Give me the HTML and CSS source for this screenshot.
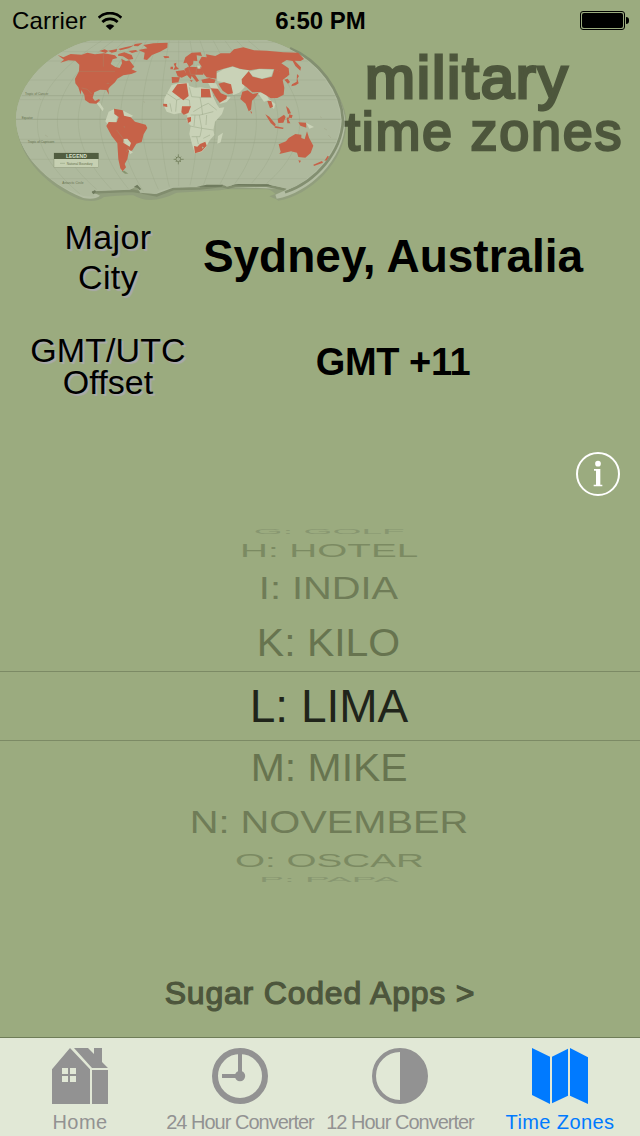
FILE: index.html
```html
<!DOCTYPE html>
<html lang="en">
<head>
  <meta charset="UTF-8">
  <meta name="viewport" content="width=device-width, initial-scale=1.0">
  <title>Military Time Zones</title>
  <link rel="stylesheet" href="styles.css">
</head>
<body>
  <div class="status-bar">
    <div class="carrier">
      <span>Carrier</span>
      <svg class="wifi" viewBox="0 0 72 54">
        <path d="M2 17 A49 49 0 0 1 70 17" fill="none" stroke="#000" stroke-width="8"/>
        <path d="M13 30 A33 33 0 0 1 59 30" fill="none" stroke="#000" stroke-width="8"/>
        <path d="M23 42 A19 19 0 0 1 49 42 L36 54 Z"/>
      </svg>
    </div>
    <div class="clock">6:50 PM</div>
    <div class="battery"><div class="battery-body"><div class="battery-level"></div></div><div class="battery-cap"></div></div>
  </div>

  <header>
    <svg class="map" viewBox="0 120 1032 495">
      <!-- raised edge -->
      <path fill="#919e7d" d="M270 122 C150 150 50 250 48 358 C50 460 125 550 235 597 Q285 612 312 591 Q370 584 400 586 Q425 600 450 600 Q490 598 530 578 L660 571 L680 568 L800 568 Q815 570 826 582 L808 589 Q830 598 835 602 C930 585 1036 490 1040 365 C1036 280 940 155 800 121 Z"/>
      <path fill="#b3bda3" d="M270 122 C150 150 50 250 48 358 C50 460 140 550 250 594 Q285 600 300 587 L275 574 L390 570 L412 556 L418 580 L470 584 L520 566 L680 560 L862 568 L826 584 L830 596 C925 580 1033 480 1036 365 C1030 270 932 152 800 121 Z"/>
      <path class="rim" d="M855 577 C950 545 1024 455 1029 362 C1025 270 955 180 870 145"/>
      <path class="rim-bottom" d="M275 577 L395 572 L418 576 L470 586 L520 567 L600 565 L665 558 L684 563 L705 557 L800 557 L860 569"/>
      <!-- ocean -->
      <path fill="#aeb99d" d="M270 122 C150 150 50 250 48 358 C50 460 140 550 250 588 L285 590 L275 574 L390 569 L412 556 L420 578 L465 582 L482 571 L520 562 L600 560 L672 553 L680 560 L705 553 L800 552 L860 566 L848 576 C945 540 1018 450 1022 360 C1018 265 925 148 798 121 Z"/>
      <path fill="#6f7b5e" d="M275 576l10-6 3 5-8 8zM402 560l10-6 12 14-6 2-5-6zM590 560l30-6 50 0-6 6-40 1zM695 556l20-4 60 1 30 0 10 5z"/>
      <path class="grid" d="M245 127H830M185 155H880M142 183H925M85 240H980M57 299H1013M48 358H1022M57 418H1012M85 478H985M150 536H920"/>
      <path class="grid" d="M305 122C60 280 60 430 240 582M340 122C120 280 130 430 290 568M375 122C190 280 200 430 335 568M410 122C265 280 270 430 385 566M440 122C335 280 340 430 430 574M475 122C410 280 410 430 475 568M508 122C475 280 475 430 508 560M536 122V558M570 122C600 280 600 430 570 556M600 122C660 280 660 430 610 556M640 122C730 280 730 430 660 552M675 122C795 280 795 430 705 550M710 122C870 280 865 430 755 549M745 122C940 280 940 430 800 550"/>
      <path class="tropic" d="M65 287H1010M48 358H1022M62 428H1008"/>

      <!-- countries without a stripe -->
      <path class="land" d="M515 255 L535 250 L565 248 L568 258 L585 263 L602 262 L632 267 L640 290 L650 312 L658 324 L673 322 L666 342 L645 365 L640 390 L643 405 L628 422 L618 442 L605 456 L584 460 L576 432 L568 402 L572 378 L560 362 L562 345 L545 338 L522 343 L500 335 L491 316 L493 295 Z"/>
      <path class="land" d="M654 408 L669 398 L662 427 L652 431 Z"/>
      <path class="land" d="M326 335 L343 327 L352 350 L348 368 L324 374 L316 364 Z M370 332 L399 347 L386 356 L372 347 Z"/>
      <path class="land" d="M287 306 L300 309 L311 326 L308 334 L298 320 Z M328 290l8 8M342 300l9 2"/>
      <path class="land" d="M650 220 L672 207 L698 200 L722 208 L748 211 L729 235 L734 262 L718 278 L700 285 L688 268 L676 248 L652 243 Z M624 248 L648 250 L656 266 L636 270 Z M674 290 L692 292 L680 306 L658 312 Z"/>
      <path class="land" d="M747 215 L778 207 L820 210 L814 228 L786 236 L758 228 Z M774 280 L796 276 L806 297 L826 312 L822 327 L812 318 L808 300 L792 305 Z M918 368 L942 381 L928 386 Z"/>
      <path class="borders" d="M500 280L530 300L545 295L568 300L570 320M510 310L515 335M530 300L527 335M568 262L575 290L600 292L605 320L580 335M600 292H635M572 345L600 345L640 335M603 320L625 310L650 330M598 345L605 385L640 390M570 378L605 385L600 410L575 410M610 415L630 405M620 345L618 375M585 345L582 378M605 320L608 345M590 410L595 432"/>

      <!-- highlighted countries -->
      <path class="red" d="M173 165 L190 172 L212 162 L245 164 L262 158 L285 163 L312 160 L345 166 L352 174 L338 178 L332 192 L346 201 L359 204 L366 190 L364 176 L378 184 L388 181 L403 200 L395 208 L411 215 L394 222 L370 226 L352 236 L345 247 L330 260 L325 267 L327 284 L319 270 L300 269 L283 277 L278 294 L285 303 L297 297 L300 301 L289 311 L269 310 L255 300 L253 285 L244 270 L242 284 L235 262 L226 250 L225 236 L237 214 L238 194 L226 182 L205 181 L181 188 L192 179 Z"/>
      <path class="red" d="M430 135 L460 130 L503 128 L502 143 L480 155 L456 165 L441 180 L431 178 L434 158 L415 150 L442 145 Z M490 168l16 1 2 4-14 2z"/>
      <path class="red" d="M298 153l16-5 11 5-8 6zM324 152l28-5-3 8-14 3zM355 147l20-5 28-6-17 9-25 6zM355 162l18-5 22 8 5 12-14 2-17-10-15-2zM404 132l24-3-14 10-13-1zM385 153l22-3 7 4-18 5z"/>
      <path class="red" d="M342 326 L368 331 L372 347 L392 352 L405 365 L437 374 L442 384 L431 403 L425 426 L409 431 L397 451 L386 457 L382 478 L374 492 L378 502 L368 514 L361 505 L355 478 L352 430 L335 408 L319 378 L326 366 L350 367 L356 351 L343 342 Z"/>
      <path class="land" d="M370 417 L382 416 L393 429 L389 440 L370 428 Z M385 448 L399 457 L390 463 Z"/>
      <path fill="#87946f" d="M365 514l8-2 12 9-10 0z"/>
      <path class="red" d="M532 253 L560 250 L566 288 L550 301 L516 275 Z M603 266 L629 267 L633 292 L603 292 Z M546 319 L573 319 L565 339 L551 344 L544 337 Z M561 353 L573 351 L573 364 L564 369 Z M489 311 L501 312 L502 321 L490 319 Z M582 438 L592 440 L600 432 L616 425 L620 437 L605 454 L585 460 Z"/>
      <path class="red" d="M515 231 L540 232 L535 247 L516 249 Z M527 214 L553 210 L561 226 L545 233 L533 229 Z M521 191 L529 188 L528 198 L537 207 L520 210 L525 200 Z M512 200h7v8h-8z M550 190 L556 172 L575 158 L602 157 L606 168 L590 166 L592 183 L580 182 L579 193 L568 201 L560 188 Z M553 207 L565 200 L605 202 L610 224 L585 224 L597 242 L590 246 L575 228 L572 238 L560 224 Z M569 241l9 0-3 5z M604 239 L628 234 L647 239 L643 249 L608 249 Z"/>
      <path class="red" d="M655 251 L672 247 L693 253 L699 280 L684 283 L668 272 Z M632 265 L653 266 L663 280 L681 287 L679 297 L659 308 L648 293 Z"/>
      <path class="red" d="M596 187 L605 170 L620 172 L618 163 L646 168 L662 160 L690 160 L702 148 L730 142 L762 151 L800 152 L850 157 L895 158 L912 177 L902 183 L884 182 L903 202 L901 212 L886 198 L878 183 L860 180 L844 190 L866 205 L868 224 L859 231 L840 215 L820 207 L778 206 L748 211 L720 206 L698 199 L668 207 L650 213 L649 236 L620 232 L606 216 L604 198 Z"/>
      <path class="red" d="M725 238 L746 214 L758 230 L786 237 L816 230 L823 207 L846 217 L862 229 L848 240 L853 263 L851 284 L832 294 L812 295 L797 285 L781 276 L757 277 L740 262 L726 251 Z M853 239l10-3 7 10-6 5z"/>
      <path class="red" d="M727 275 L743 271 L758 282 L776 278 L769 289 L756 302 L753 329 L746 334 L737 311 L721 297 Z M751 333l5 3-2 6z M802 303 L814 303 L819 320 L810 325 Z M796 343 L808 350 L827 373 L825 380 L812 369 Z M825 378l26 5-2 4-25-4z M833 357 L852 344 L857 351 L850 368 L835 369 Z M860 353l11-2-6 7 6 12-9 0z M858 318l9 8 6 14-9 2z M868 343l10 3-3 9-9-3z M895 367 L918 368 L919 383 L901 377 Z M891 222l6 6-5 8 4 14-9 6-13 3 2-6 14-8z"/>
      <path class="red" d="M836 433 L858 424 L866 414 L886 402 L904 404 L904 414 L914 418 L921 394 L927 413 L940 437 L932 459 L916 473 L895 471 L891 458 L873 454 L838 462 L842 455 Z M895 481l8 1-4 7z M983 467l4 3-7 11-7 2z M966 483l3 5-27 10-2-4z"/>
      <path class="seams" d="M237 214H345M310 160V200M245 264L262 268L275 282M350 390L370 417L372 428M380 456L385 440M565 200L572 224L585 224M590 202L588 220"/>
      <path class="specks" d="M590 196h11v10h-8zM606 440l5 2-3 4zM320 250l8 0M372 378l2 5M118 295l4 4M135 405l8 5M430 305l5 2M960 350l5 3M972 385l9 5M985 405l8 9"/>

      <!-- compass -->
      <g fill="none" stroke="#66724f" stroke-width="2">
        <circle cx="535" cy="478" r="7"/>
        <path d="M535 463V471M535 485V493M521 478H528M542 478H551M527 470l4 4M543 486l-4-4M543 470l-4 4M527 486l4-4"/>
      </g>

      <rect x="162" y="459" width="134" height="43" fill="#c6d0b2" stroke="#7c8767"/>
      <rect x="162" y="459" width="134" height="18" fill="#515d40"/>
      <text class="legend-title" x="229" y="474">LEGEND</text>
      <path d="M180 490h15" stroke="#9aa786" stroke-width="2"/>
      <text class="map-text" x="200" y="494">National Boundary</text>
      <text class="map-text" x="75" y="286">Tropic of Cancer</text>
      <text class="map-text" x="65" y="358">Equator</text>
      <text class="map-text" x="83" y="428">Tropic of Capricorn</text>
      <text class="map-text" x="187" y="552">Antarctic Circle</text>
    </svg>
    <h1>
      <span class="title-top">military</span>
      <span class="title-bottom">time zones</span>
    </h1>
  </header>

  <dl class="facts">
    <dt class="city-label">Major<br>City</dt>
    <dd class="city">Sydney, Australia</dd>
    <dt class="offset-label">GMT/UTC<br>Offset</dt>
    <dd class="offset">GMT +11</dd>
  </dl>

  <button class="info" aria-label="Info">
    <svg viewBox="0 0 132 132" fill="#fff">
      <circle cx="66" cy="66" r="63" fill="none" stroke="#fff" stroke-width="6"/>
      <circle cx="66" cy="35" r="8.5"/>
      <path d="M54 51H73V98H79V103H53V98H60V56H54Z"/>
    </svg>
  </button>

  <ul class="picker">
    <li class="row-4"><span>G: GOLF</span></li>
    <li class="row-3"><span>H: HOTEL</span></li>
    <li class="row-2"><span>I: INDIA</span></li>
    <li class="row-1"><span>K: KILO</span></li>
    <li class="selected"><span>L: LIMA</span></li>
    <li class="row-1"><span>M: MIKE</span></li>
    <li class="row-2"><span>N: NOVEMBER</span></li>
    <li class="row-3"><span>O: OSCAR</span></li>
    <li class="row-4"><span>P: PAPA</span></li>
  </ul>

  <a class="more-apps">Sugar Coded Apps &gt;</a>

  <nav>
    <a class="tab">
      <svg viewBox="0 0 168 168" fill="currentColor">
        <path fill-rule="evenodd" d="M54 0L114 64V168H0V64Z M30 60V78H48V60Z M54 60V78H72V60Z M30 84V102H48V84Z M54 84V102H72V84Z"/>
        <path d="M66 0H108L126 18V0H150V42L168 60H120Z"/>
        <path d="M120 66H168V168H120Z"/>
      </svg>
      <span>Home</span>
    </a>
    <a class="tab tight">
      <svg viewBox="0 0 168 168" fill="currentColor">
        <circle cx="84" cy="84" r="75" fill="none" stroke="currentColor" stroke-width="18"/>
        <path d="M78 14H90V84H78ZM30 78H84V90H30Z"/>
        <circle cx="84" cy="84" r="15.5"/>
      </svg>
      <span>24 Hour Converter</span>
    </a>
    <a class="tab tight">
      <svg viewBox="0 0 168 168" fill="currentColor">
        <circle cx="84" cy="84" r="78" fill="none" stroke="currentColor" stroke-width="12"/>
        <path d="M84 4A80 80 0 0 1 84 164Z"/>
      </svg>
      <span>12 Hour Converter</span>
    </a>
    <a class="tab active">
      <svg viewBox="0 0 168 168" fill="currentColor">
        <path d="M0 0L54 26V168L0 141ZM60 26L108 2V143L60 166ZM114 0L168 28V168L114 143Z"/>
      </svg>
      <span>Time Zones</span>
    </a>
  </nav>
</body>
</html>
```
FILE: styles.css
```css
* {
  box-sizing: border-box;
}

body {
  display: flex;
  flex-direction: column;
  width: 640px;
  height: 1136px;
  margin: 0;
  overflow: hidden;
  background-color: #9bab7f;
  color: #000;
  font-family: "Liberation Sans", Arial, sans-serif;
}

.status-bar {
  display: grid;
  grid-template-columns: 1fr auto 1fr;
  align-items: center;
  height: 40px;
  padding: 1px 11px 0 12px;
  font-size: 24px;
}

.carrier {
  display: flex;
  align-items: center;
  gap: 11px;
  letter-spacing: 0.2px;
}

.wifi {
  width: 24px;
  height: 18px;
}

.clock {
  font-weight: bold;
}

.battery {
  display: flex;
  align-items: center;
  justify-content: flex-end;
  gap: 1px;
}

.battery-body {
  width: 45px;
  height: 19px;
  padding: 1px;
  border: 1px solid #000;
  border-radius: 3px;
}

.battery-level {
  height: 15px;
  border-radius: 2px;
  background-color: #000;
}

.battery-cap {
  width: 3px;
  height: 7px;
  border-radius: 0 3px 3px 0;
  background-color: #000;
}

header {
  display: flex;
  height: 177px;
}

.map {
  width: 344px;
  height: 165px;
  overflow: visible;
}

.rim {
  fill: none;
  stroke: #838f71;
  stroke-width: 8;
}

.rim-bottom {
  fill: none;
  stroke: #818d6e;
  stroke-width: 8;
}

.grid {
  fill: none;
  stroke: #98a586;
  stroke-width: 1;
}

.tropic {
  fill: none;
  stroke: #939f80;
  stroke-width: 1.5;
}

.land {
  fill: #c9d2b7;
}

.borders {
  fill: none;
  stroke: #a5b192;
  stroke-width: 2;
}

.red {
  fill: #c66248;
}

.seams {
  fill: none;
  stroke: #ab8365;
  stroke-width: 1.5;
}

.specks {
  fill: #c9d2b7;
  stroke: #9a9a7d;
  stroke-width: 1;
}

.legend-title {
  fill: #dbe3cd;
  font-size: 15px;
  font-weight: bold;
  text-anchor: middle;
}

.map-text {
  fill: #66724f;
  font-size: 9.5px;
}

h1 {
  margin: 0;
  padding-top: 8px;
  color: #4d563c;
  font-weight: normal;
  white-space: nowrap;
}

h1 span {
  display: block;
}

.title-top {
  padding-left: 21px;
  font-size: 60px;
  line-height: 60px;
  letter-spacing: 1.8px;
  -webkit-text-stroke: 3px #4d563c;
}

.title-bottom {
  padding-left: 1px;
  font-size: 54px;
  line-height: 47px;
  letter-spacing: 1.7px;
  -webkit-text-stroke: 2.4px #4d563c;
}

.facts {
  display: grid;
  grid-template-columns: 176px 394px;
  grid-template-rows: 80px 64px;
  row-gap: 37px;
  align-items: center;
  margin: 0;
  padding-left: 20px;
  text-align: center;
}

.facts dt {
  font-size: 34px;
  letter-spacing: 0.4px;
  text-shadow: 2px 2px 1px #aaa;
}

.facts dd {
  margin: 0;
  font-weight: bold;
  white-space: nowrap;
}

.city-label {
  line-height: 40px;
}

.facts .offset-label {
  letter-spacing: 0.1px;
  line-height: 32px;
}

.facts .city {
  padding-bottom: 2px;
  font-size: 46px;
  letter-spacing: -0.05px;
}

.facts .offset {
  padding-bottom: 8px;
  font-size: 38px;
  letter-spacing: -0.4px;
}

.info {
  align-self: flex-end;
  width: 44px;
  height: 44px;
  margin: 54px 20px 0 0;
  padding: 0;
  border: 0;
  background: none;
}

.info svg {
  display: block;
}

/* wheel picker: rows get flatter and paler away from the middle */
.picker {
  margin: 28px 0 0;
  padding: 0;
  list-style: none;
  font-size: 46px;
}

.picker li {
  display: flex;
  align-items: center;
  justify-content: center;
  padding-left: 18px;
  line-height: 1;
  white-space: nowrap;
}

.picker .selected {
  height: 70px;
  border-top: 1px solid #7c8a65;
  border-bottom: 1px solid #7c8a65;
  color: #20241a;
}

.picker .row-1 {
  height: 55px;
  padding-bottom: 3px;
  color: #67744f;
}

.picker .row-2 {
  height: 54px;
  padding-bottom: 2px;
  color: #6f7c57;
}

.picker .row-3 {
  height: 22px;
  padding-bottom: 2px;
  color: #7b8a62;
}

.row-4 {
  height: 16px;
  color: #879670;
}

.row-1 span {
  transform: scale(0.89, 0.85);
}

.row-2 span {
  transform: scale(0.865, 0.68);
}

.row-3 span {
  transform: scale(0.84, 0.41);
}

.row-4 span {
  transform: scale(0.81, 0.15);
}

.more-apps {
  margin-top: 87px;
  color: #4d563c;
  font-size: 32px;
  line-height: 36px;
  letter-spacing: 0.8px;
  text-align: center;
  -webkit-text-stroke: 1.2px #4d563c;
}

nav {
  display: flex;
  height: 99px;
  margin-top: auto;
  border-top: 1px solid #6f7d58;
  background-color: #e1e8d6;
}

.tab {
  display: flex;
  flex: 1;
  flex-direction: column;
  align-items: center;
  padding-top: 10px;
  color: #929292;
  font-size: 20px;
  letter-spacing: 0.4px;
  white-space: nowrap;
}

.tab svg {
  width: 56px;
  height: 56px;
}

.tab span {
  margin-top: 7px;
  line-height: 23px;
}

.tight span {
  letter-spacing: -1px;
}

.active {
  color: #007aff;
}
```
